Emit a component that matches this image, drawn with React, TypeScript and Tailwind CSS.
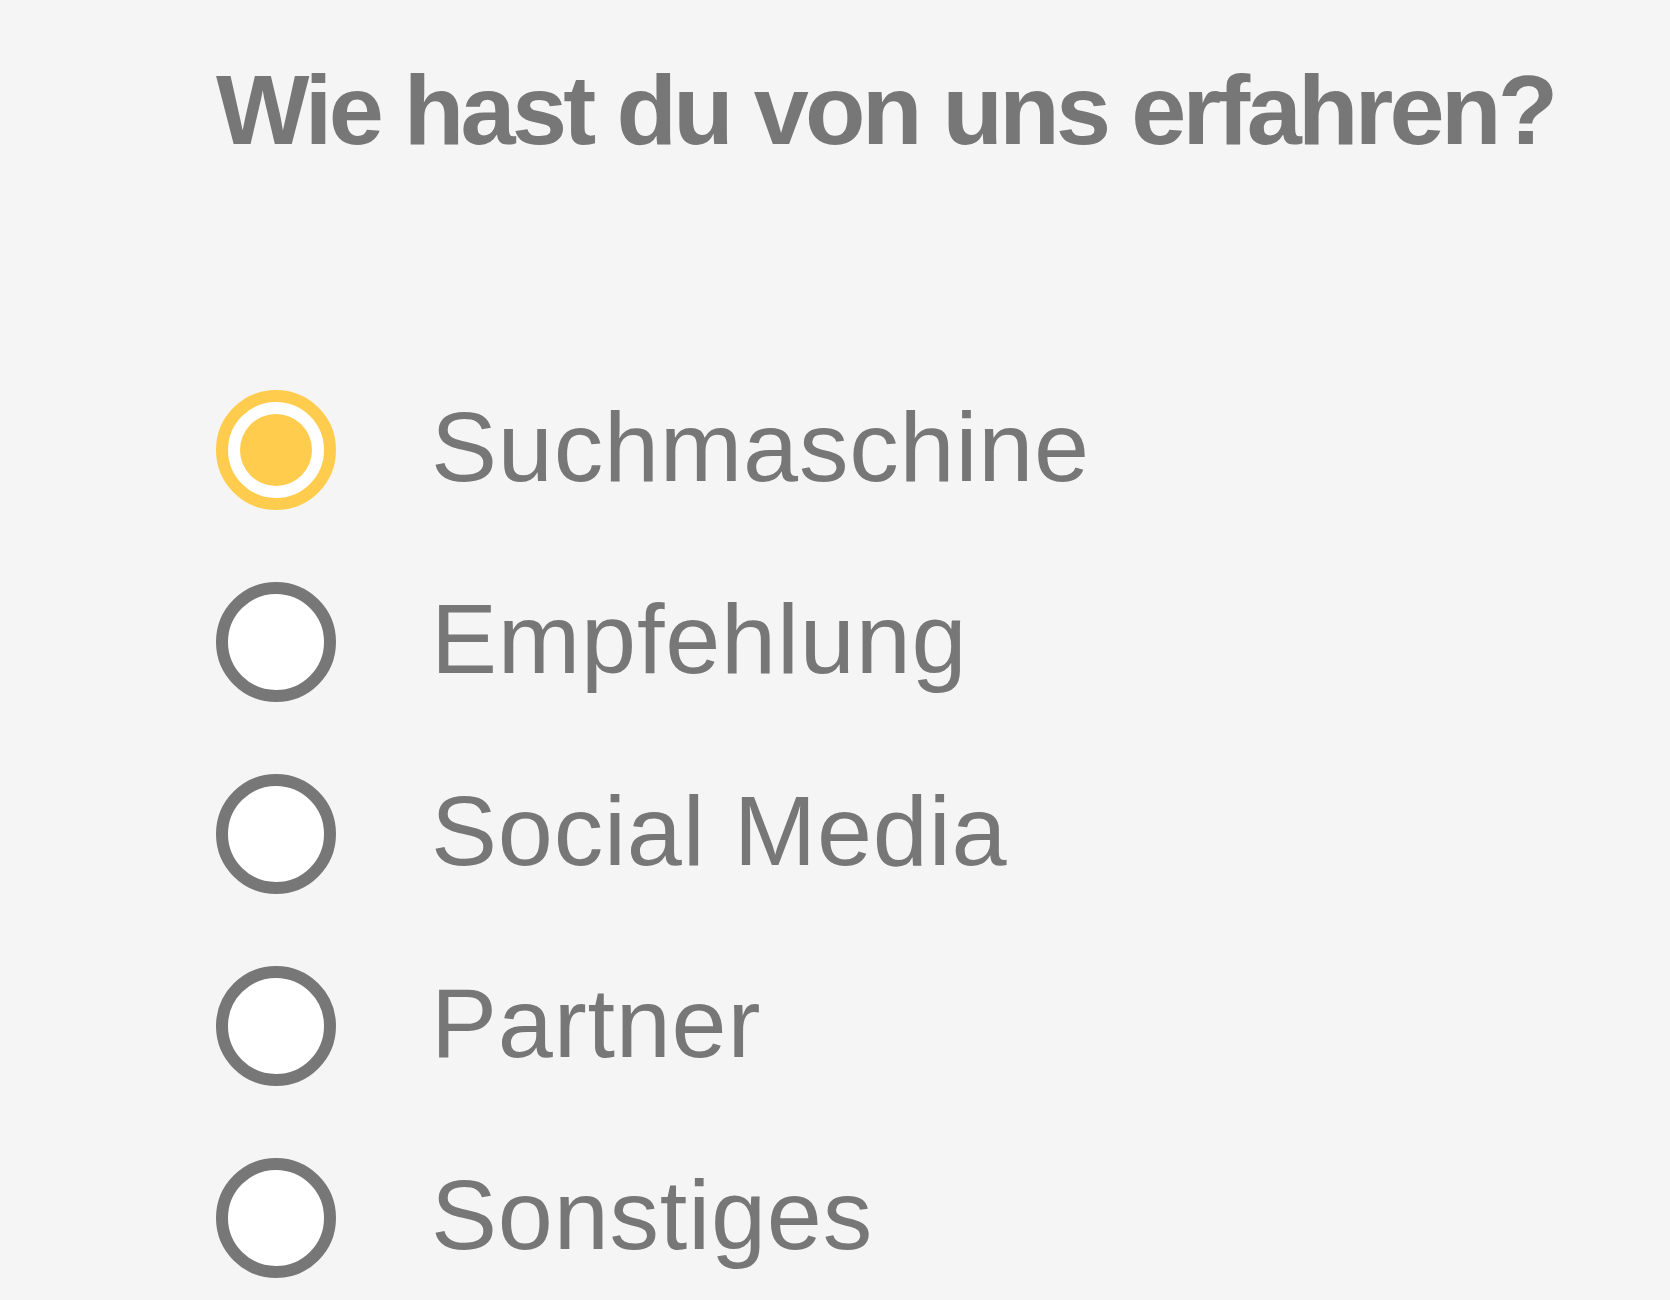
import { useState } from "react";

const OPTIONS = [
  "Suchmaschine",
  "Empfehlung",
  "Social Media",
  "Partner",
  "Sonstiges",
];

type RadioOptionProps = {
  label: string;
  checked: boolean;
  onSelect: () => void;
};

const RadioOption = ({ label, checked, onSelect }: RadioOptionProps) => (
  <button
    type="button"
    onClick={onSelect}
    className="flex items-center gap-[95px] text-left cursor-pointer"
  >
    <span
      className={
        checked
          ? "flex size-[120px] shrink-0 items-center justify-center rounded-full border-[12px] border-[#FFCC4D] bg-white"
          : "flex size-[120px] shrink-0 items-center justify-center rounded-full border-[12px] border-[#777777] bg-white"
      }
    >
      {checked && <span className="size-[72px] rounded-full bg-[#FFCC4D]" />}
    </span>
    <span className="pb-[8px] text-[99px] leading-none tracking-[0.8px] text-[#777777]">
      {label}
    </span>
  </button>
);

export default function App() {
  const [selected, setSelected] = useState("Suchmaschine");

  return (
    <div
      className="min-h-[1300px] w-full bg-[#F5F5F5] pl-[216px] pt-[60px]"
      style={{ fontFamily: '"Liberation Sans", Arial, sans-serif' }}
    >
      <h1 className="text-[99px] font-bold leading-none tracking-[-3.7px] text-[#777777]">
        Wie hast du von uns erfahren?
      </h1>
      <div className="mt-[231px] flex flex-col gap-[72px]">
        {OPTIONS.map((option) => (
          <RadioOption
            key={option}
            label={option}
            checked={selected === option}
            onSelect={() => setSelected(option)}
          />
        ))}
      </div>
    </div>
  );
}
